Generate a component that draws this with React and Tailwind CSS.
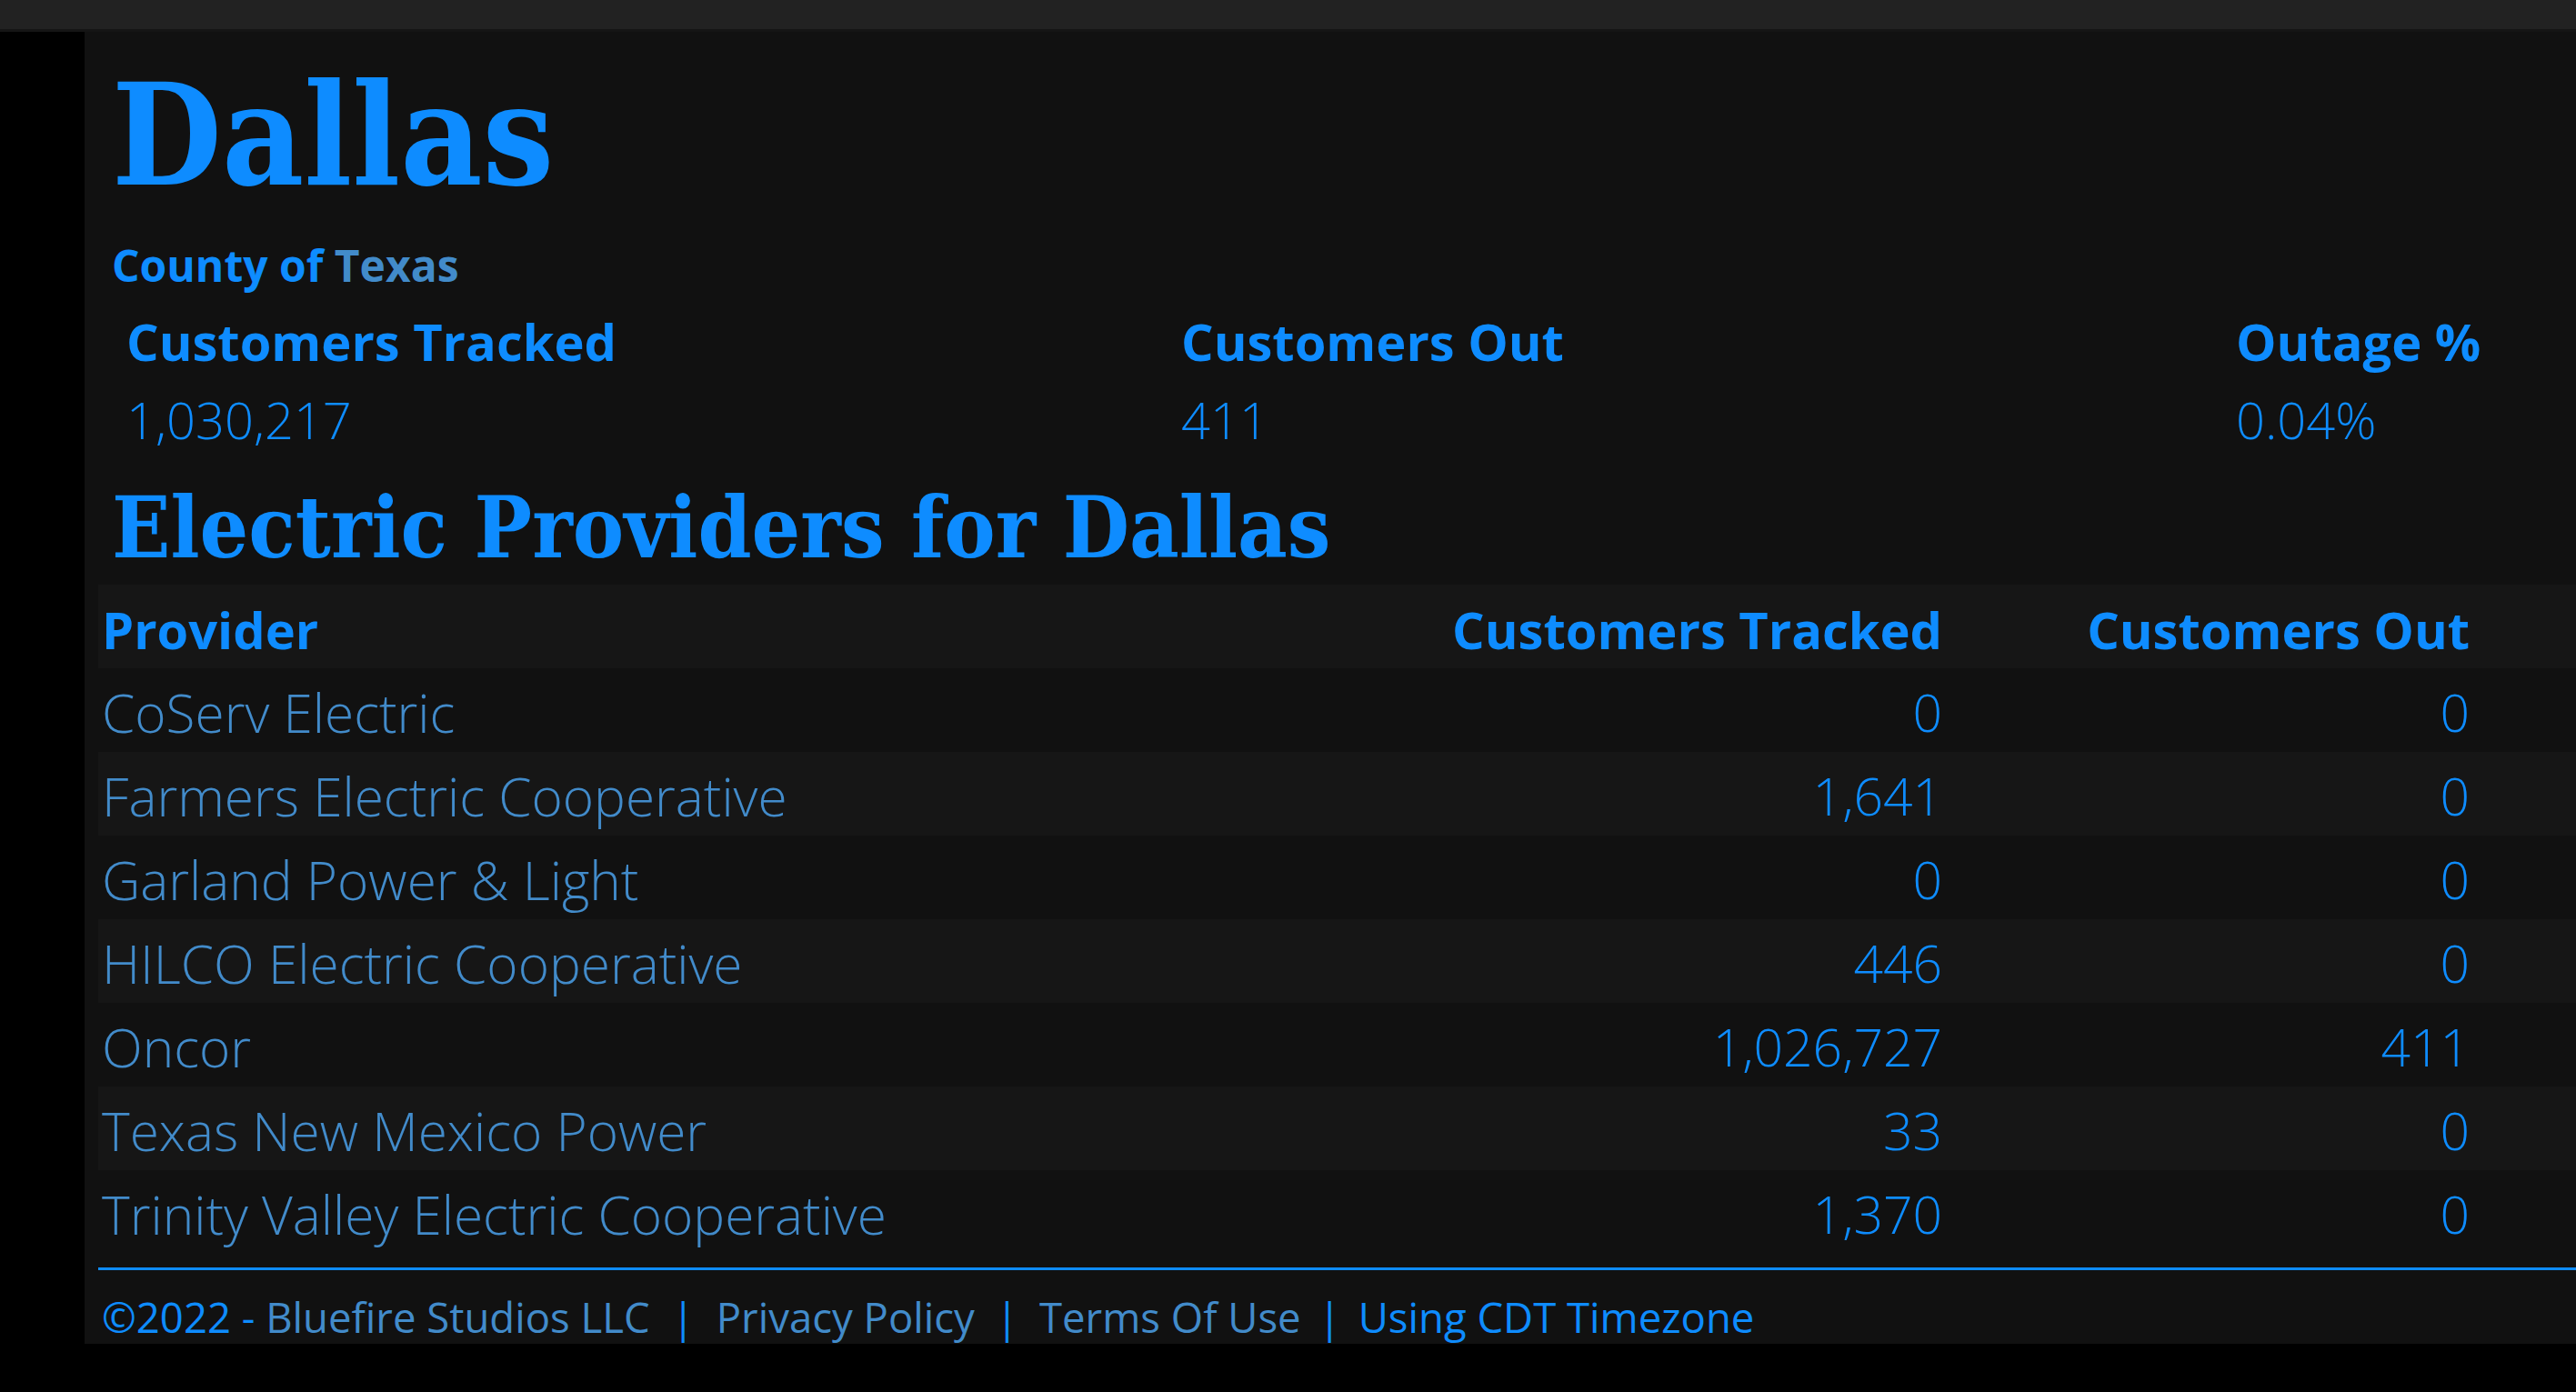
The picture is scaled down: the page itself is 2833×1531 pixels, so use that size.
import React from "react"

const providers = [
	{ name: "CoServ Electric", tracked: "0", out: "0" },
	{ name: "Farmers Electric Cooperative", tracked: "1,641", out: "0" },
	{ name: "Garland Power & Light", tracked: "0", out: "0" },
	{ name: "HILCO Electric Cooperative", tracked: "446", out: "0" },
	{ name: "Oncor", tracked: "1,026,727", out: "411" },
	{ name: "Texas New Mexico Power", tracked: "33", out: "0" },
	{ name: "Trinity Valley Electric Cooperative", tracked: "1,370", out: "0" },
]

const stats = [
	{ label: "Customers Tracked", value: "1,030,217" },
	{ label: "Customers Out", value: "411" },
	{ label: "Outage %", value: "0.04%" },
]

const App = () => {
	return (
		<div className="min-h-screen w-screen overflow-hidden bg-black font-[family-name:'Open_Sans','Noto_Sans',sans-serif] text-[#0e8cff]">
			{/* top bar */}
			<div className="h-[32px] bg-[#222222]" />
			<div className="h-[3px] bg-[#151515]" />

			<div className="flex">
				<div className="w-[93px] shrink-0" />
				<main className="flex-1 min-w-0 bg-[#111111] pl-[15px] pt-[36px]">
					{/* Title */}
					<h1 className="pl-[15px] font-[family-name:'DejaVu_Serif_Condensed','DejaVu_Serif',serif] text-[155px] leading-[155px] font-bold">
						Dallas
					</h1>
					<div className="pl-[15px] mt-[36px] text-[48px] leading-[60px] font-bold">
						County of <a className="text-[#428bca]">Texas</a>
					</div>

					{/* Stats */}
					<div className="grid grid-cols-[1160px_1160px_1160px] pl-[15px]">
						{stats.map((s) => (
							<div key={s.label} className="px-4">
								<div className="mt-[18px] text-[56px] leading-[70px] font-bold whitespace-nowrap">
									{s.label}
								</div>
								<div className="mt-[16px] text-[56px] leading-[70px] font-light whitespace-nowrap">
									{s.value}
								</div>
							</div>
						))}
					</div>

					<h2 className="pl-[15px] mt-[34px] font-[family-name:'DejaVu_Serif_Condensed','DejaVu_Serif',serif] font-bold text-[94px] leading-[100px] whitespace-nowrap">
						Electric Providers for Dallas
					</h2>

					{/* Table */}
					<div className="mt-[13px] w-[2760px]">
						<div className="grid grid-cols-[1387px_646px_580px_1fr] bg-[#161616] h-[92px] pt-[7px] text-[56px] leading-[85px] font-bold whitespace-nowrap">
							<div className="pl-[4px]">Provider</div>
							<div className="pr-[5px] text-right">Customers Tracked</div>
							<div className="pr-[5px] text-right">Customers Out</div>
							<div />
						</div>
						{providers.map((p, i) => (
							<div
								key={p.name}
								className={
									"grid grid-cols-[1387px_646px_580px_1fr] h-[92px] pt-[4px] text-[57px] leading-[88px] font-light whitespace-nowrap " +
									(i % 2 === 1 ? "bg-[#161616]" : "bg-[#111111]")
								}
							>
								<div className="pl-[4px] text-[58.5px] text-[#428bca]">{p.name}</div>
								<div className="pr-[5px] text-right">{p.tracked}</div>
								<div className="pr-[5px] text-right">{p.out}</div>
								<div />
							</div>
						))}
					</div>

					<div className="mt-[15px] h-[3px] bg-[#0e8cff]" />

					{/* Footer */}
					<footer className="mt-[21px] pl-[4px] flex text-[45.5px] leading-[60px] whitespace-nowrap">
						<span>©2022 -&nbsp;</span>
						<a className="text-[#428bca]">Bluefire Studios LLC</a>
						<span className="px-[24px]">|</span>
						<a className="text-[#428bca]">Privacy Policy</a>
						<span className="px-[23px]">|</span>
						<a className="text-[#428bca]">Terms Of Use</a>
						<span className="px-[19px]">|</span>
						<span>Using CDT Timezone</span>
					</footer>
				</main>
			</div>
		</div>
	)
}

export default App
